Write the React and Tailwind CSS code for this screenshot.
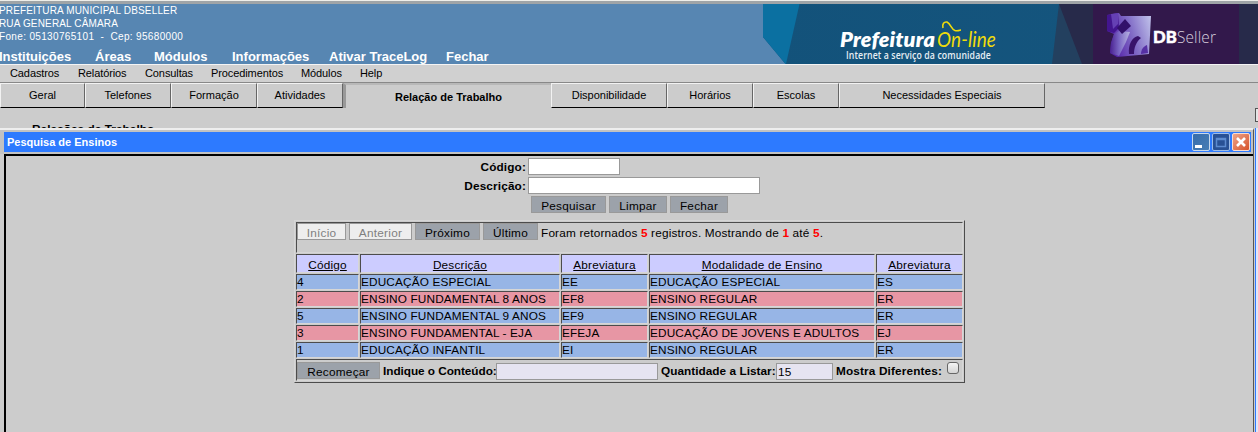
const mainMenu = [
  ['Instituições', 'w-[96px]'],
  ['Áreas', 'w-[59px]'],
  ['Módulos', 'w-[78px]'],
  ['Informações', 'w-[97px]'],
  ['Ativar TraceLog', 'w-[117px]'],
  ['Fechar', 'w-[60px]'],
];
const subMenu = [
  ['Cadastros', 'w-[68px]'],
  ['Relatórios', 'w-[67px]'],
  ['Consultas', 'w-[66px]'],
  ['Procedimentos', 'w-[90px]'],
  ['Módulos', 'w-[59px]'],
  ['Help', 'w-[40px]'],
];
const tabs = [
  ['Geral', 'w-[85px]'],
  ['Telefones', 'w-[86px]'],
  ['Formação', 'w-[86px]'],
  ['Atividades', 'w-[86px]'],
  ['Relação de Trabalho', 'w-[208px]', true],
  ['Disponibilidade', 'w-[116px]'],
  ['Horários', 'w-[86px]'],
  ['Escolas', 'w-[86px]'],
  ['Necessidades Especiais', 'w-[206px]'],
];
const headers = ['Código', 'Descrição', 'Abreviatura', 'Modalidade de Ensino', 'Abreviatura'];
const rows = [
  ['4', 'EDUCAÇÃO ESPECIAL', 'EE', 'EDUCAÇÃO ESPECIAL', 'ES'],
  ['2', 'ENSINO FUNDAMENTAL 8 ANOS', 'EF8', 'ENSINO REGULAR', 'ER'],
  ['5', 'ENSINO FUNDAMENTAL 9 ANOS', 'EF9', 'ENSINO REGULAR', 'ER'],
  ['3', 'ENSINO FUNDAMENTAL - EJA', 'EFEJA', 'EDUCAÇÃO DE JOVENS E ADULTOS', 'EJ'],
  ['1', 'EDUCAÇÃO INFANTIL', 'EI', 'ENSINO REGULAR', 'ER'],
];
const inset = 'border border-t-[#4c4c4c] border-l-[#4c4c4c] border-b-[#d6d6d6] border-r-[#d6d6d6]';

function Button({ children, w, disabled }) {
  return (
    <button
      disabled={disabled}
      className={`h-[17px] shrink-0 border border-[#999999] text-center leading-[18px] tracking-[0.25px] ${w} ${
        disabled ? 'bg-[#eeeeee] text-[#808080]' : 'bg-[#9ca2aa] text-black'
      }`}
    >
      {children}
    </button>
  );
}

function Banner() {
  return (
    <svg className="block h-[60px] w-[495px] shrink-0" viewBox="763 4 495 60">
      <defs>
        <linearGradient id="mid" x1="0" x2="1">
          <stop offset="0" stopColor="#13527a" />
          <stop offset="1" stopColor="#15567f" />
        </linearGradient>
        <linearGradient id="cube" x1="0" y1="0.3" x2="1" y2="0">
          <stop offset="0" stopColor="#5523a8" />
          <stop offset="0.5" stopColor="#8470c8" />
          <stop offset="1" stopColor="#c3c6ec" />
        </linearGradient>
        <linearGradient id="cubeLow" x1="0" y1="0" x2="1" y2="0">
          <stop offset="0" stopColor="#492090" />
          <stop offset="0.45" stopColor="#7a66c4" />
          <stop offset="1" stopColor="#b6b2e0" />
        </linearGradient>
      </defs>
      <path d="M763 4H1258V64H785.500L763 37Z" fill="url(#mid)" />
      <path d="M763 4H799.500L786 64H785.500L763 37Z" fill="#0b70a1" />
      <path d="M1059 4L1052 64H1258V4Z" fill="#23405f" />
      <path d="M1059 4L1082 64H1258V4Z" fill="#272a4a" />
      <path d="M1093 4H1239V64H1093Z" fill="#32184b" />
      <path d="M1107 15L1119 13L1121 16L1151 16L1149 54L1139 55L1117 57L1110 53L1111 43L1114 34L1107 31Z" fill="url(#cube)" />
      <path d="M1107 15L1118 13L1119 28L1114 33L1107 31Z" fill="#43158f" />
      <path d="M1111 14L1118 13L1118 24L1113 29Z" fill="#6540b4" />
      <path d="M1114 34L1119 31L1130 32L1126 42L1119 56L1110 53L1111 43Z" fill="url(#cubeLow)" />
      <path d="M1117 28L1125 19L1131 26L1122 34Z" fill="#32106a" />
      <path d="M1129 54C1128 45 1132 37 1138 36L1141 38C1136 42 1134 48 1134 54Z" fill="#38136b" />
      <path d="M1141 54C1141 49 1144 46 1147 45L1148 53Z" fill="#5630a4" />
      <text x="840" y="47" textLength="95" lengthAdjust="spacingAndGlyphs" className="fill-white font-['Lato'] text-[20px] font-extrabold italic">Prefeitura</text>
      <text x="937" y="47" textLength="59" lengthAdjust="spacingAndGlyphs" className="fill-[#f0dc0a] font-['Lato'] text-[21px] italic">On-line</text>
      <path d="M943 28C942 24 944 21.500 947 22C951 24 951 29 955 30.500C958 31.500 960 30 961 30" fill="none" stroke="#f0dc0a" strokeWidth="1.600" />
      <text x="846" y="59" textLength="145" lengthAdjust="spacingAndGlyphs" className="fill-[#e6eef4] font-['Open_Sans'] text-[10px] font-semibold">Internet a serviço da comunidade</text>
      <text x="1153" y="43" textLength="24" lengthAdjust="spacingAndGlyphs" className="fill-white font-['Lato'] text-[17px] font-black" stroke="#fff" strokeWidth="0.500">DB</text>
      <text x="1177" y="43" textLength="39" lengthAdjust="spacingAndGlyphs" className="fill-[#d8d0df] font-['Open_Sans'] text-[17px] font-light">Seller</text>
    </svg>
  );
}

function WindowButtons() {
  return (
    <svg className="block h-[20px] w-[60px]" viewBox="1191 132 60 20">
      <defs>
        <linearGradient id="wb" x1="0" y1="0" x2="1" y2="1">
          <stop offset="0" stopColor="#376dab" />
          <stop offset="1" stopColor="#477eb5" />
        </linearGradient>
        <linearGradient id="wr" x1="0" y1="0" x2="1" y2="1">
          <stop offset="0" stopColor="#eda78d" />
          <stop offset="1" stopColor="#d64f25" />
        </linearGradient>
      </defs>
      <rect x="1192.500" y="133.500" width="17" height="17" rx="1.500" fill="url(#wb)" stroke="#c8d9eb" />
      <rect x="1195" y="145" width="7" height="3" fill="#fff" />
      <rect x="1212.500" y="133.500" width="17" height="17" rx="1.500" fill="#285195" stroke="#9dbce6" />
      <path d="M1216.500 138.500H1225.500V146.500H1216.500ZM1216 139.500H1226" fill="none" stroke="#5c8bd0" strokeWidth="1.500" />
      <rect x="1232.500" y="133.500" width="17" height="17" rx="1.500" fill="url(#wr)" stroke="#f7ddd2" />
      <path d="M1237 138L1245 146M1245 138L1237 146" stroke="#fff" strokeWidth="2.600" />
    </svg>
  );
}

function Tab({ label, w, active }) {
  if (active) {
    return (
      <div className={`h-[25px] shrink-0 border-t-2 border-l-[3px] border-t-[#b8b8b8] border-l-[#999999] text-center text-[11px] leading-[24px] font-bold ${w}`}>
        {label}
      </div>
    );
  }
  return (
    <div className={`h-[25px] shrink-0 border border-t-[#f2f2f2] border-r-[#666666] border-b-black border-l-[#f2f2f2] text-center text-[11px] leading-[23px] ${w}`}>
      {label}
    </div>
  );
}

export default function App() {
  return (
    <div className="flex h-[432px] w-[1258px] flex-col overflow-hidden bg-[#cccccc] font-['Liberation_Sans',Arial,sans-serif] text-[11.8px] tracking-[0.14px] whitespace-nowrap text-black">
      <div className="h-[4px] shrink-0 border-t border-[#eeeeea] bg-[#9fa4a7]" />
      <header className="flex h-[60px] shrink-0 justify-between bg-[#5786b2] text-white">
        <div className="-ml-px">
          <div className="h-[43px] text-[10px] leading-[13px] tracking-[0.15px]">
            <div>PREFEITURA MUNICIPAL DBSELLER</div>
            <div>RUA GENERAL CÂMARA</div>
            <div className="tracking-[0.34px] whitespace-pre">Fone: 05130765101  -  Cep: 95680000</div>
          </div>
          <nav className="flex text-[13px] leading-[19px] font-bold tracking-normal">
            {mainMenu.map(([t, w]) => (
              <span key={t} className={`shrink-0 ${w}`}>{t}</span>
            ))}
          </nav>
        </div>
        <Banner />
      </header>
      <nav className="flex h-[19px] shrink-0 border-t border-b border-t-[#f4f4f4] border-b-[#888888] bg-[#d0d0d0] pl-[10px] text-[11px] leading-[17px] tracking-[-0.1px]">
        {subMenu.map(([t, w]) => (
          <span key={t} className={`shrink-0 ${w}`}>{t}</span>
        ))}
      </nav>
      <div className="flex h-[25px] shrink-0 tracking-normal">
        {tabs.map(([t, w, active]) => (
          <Tab key={t} label={t} w={w} active={active} />
        ))}
      </div>
      <div className="flex h-[20px] shrink-0 justify-between overflow-hidden">
        <div className="pt-[13px] pl-[32px] leading-[16px] font-bold tracking-[0.05px]">Relações de Trabalho</div>
        <div className="h-[14px] w-[3px] border-t border-b border-l border-[#555555] bg-[#e4e4e4]" />
      </div>
      <div className="flex min-h-0 flex-1">
        <section className="flex w-[1254px] shrink-0 flex-col border-t-2 border-r border-t-[#eeeeee] border-r-[#555555]">
          <div className="h-[24px] shrink-0 border-t-2 border-r-2 border-b-2 border-l-4 border-[#c2c2c2]">
            <div className="flex h-[20px] justify-between bg-[#2d7aff] pl-[3px] text-[11px] leading-[20px] font-bold tracking-normal text-white">
              <span>Pesquisa de Ensinos</span>
              <WindowButtons />
            </div>
          </div>
          <div className="ml-[4px] flex-1 border-t-2 border-l-2 border-black pt-[2px]">
            <form className="flex flex-col gap-[2px]">
              <div className="flex h-[17px]">
                <b className="w-[520px] text-right leading-[18px]">Código:</b>
                <input className="ml-[2px] h-[17px] w-[92px] border border-[#999999] bg-white" />
              </div>
              <div className="flex h-[17px]">
                <b className="w-[520px] text-right leading-[18px]">Descrição:</b>
                <input className="ml-[2px] h-[17px] w-[232px] border border-[#999999] bg-white" />
              </div>
              <div className="flex gap-[3px] pl-[525px]">
                <Button w="w-[75px]">Pesquisar</Button>
                <Button w="w-[58px]">Limpar</Button>
                <Button w="w-[58px]">Fechar</Button>
              </div>
            </form>
            <div className="mt-[7px] ml-[288px] flex h-[163px] w-[671px] flex-col gap-px border border-t-[#d6d6d6] border-r-[#4c4c4c] border-b-[#4c4c4c] border-l-[#d6d6d6] p-px">
              <div className={`flex h-[31px] shrink-0 gap-[3px] ${inset}`}>
                <Button w="w-[49px]" disabled>Início</Button>
                <Button w="w-[63px]" disabled>Anterior</Button>
                <Button w="w-[65px]">Próximo</Button>
                <Button w="w-[55px]">Último</Button>
                <span className="leading-[20px] tracking-[0.17px]">
                  Foram retornados <b className="text-[#ff0000]">5</b> registros. Mostrando de <b className="text-[#ff0000]">1</b> até <b className="text-[#ff0000]">5</b>.
                </span>
              </div>
              <div className="grid grid-cols-[63px_200px_87px_226px_87px] gap-px">
                {headers.map((h, i) => (
                  <div key={i} className={`h-[19px] bg-[#ccccff] text-center leading-[20px] tracking-[0.2px] underline ${inset}`}>{h}</div>
                ))}
                {rows.map((r, i) =>
                  r.map((c, j) => (
                    <div key={`${i}-${j}`} className={`h-[16px] leading-[15px] ${inset} ${i % 2 ? 'bg-[#e796a4]' : 'bg-[#97b5e6]'}`}>{c}</div>
                  ))
                )}
              </div>
              <div className={`flex h-[22px] shrink-0 pt-[2px] leading-[18px] ${inset}`}>
                <Button w="w-[83px]">Recomeçar</Button>
                <b className="ml-[3px] w-[113px] tracking-[-0.05px]">Indique o Conteúdo:</b>
                <input className="mt-px h-[17px] w-[162px] border border-[#999999] bg-[#e6e4f1]" />
                <b className="ml-[3px] w-[115px] tracking-[0.03px]">Quantidade a Listar:</b>
                <input defaultValue="15" className="mt-px h-[17px] w-[57px] border border-[#999999] bg-[#e6e4f1] px-px" />
                <b className="ml-[3px] w-[111px] tracking-[0.14px]">Mostra Diferentes:</b>
                <span className="size-[12px] rounded-[3px] border border-[#666666] bg-linear-to-b from-[#f4f4f4] to-[#d4d4d4]" />
              </div>
            </div>
          </div>
        </section>
        <div className="ml-[1px] w-[3px] border-l border-[#2d7aff] bg-[#dfe6f8]" />
      </div>
    </div>
  );
}
